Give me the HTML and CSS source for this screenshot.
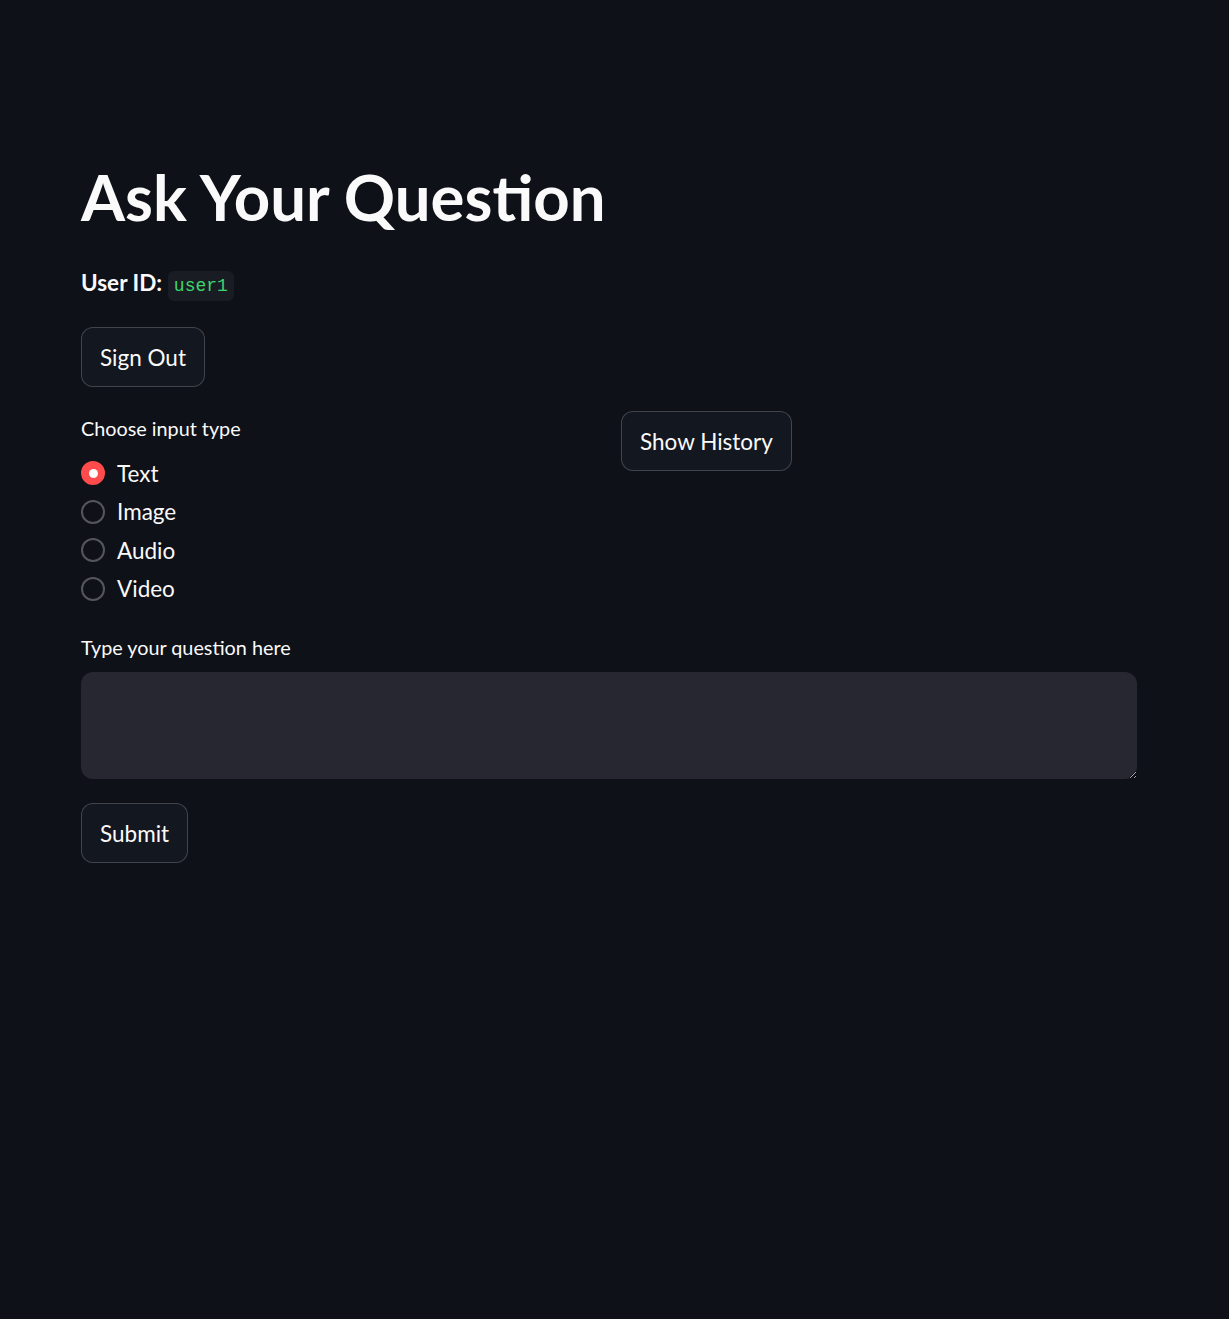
FILE: index.html
```html
<!DOCTYPE html>
<html lang="en">
<head>
<meta charset="utf-8">
<title>Ask Your Question</title>
<link rel="stylesheet" href="styles.css">
</head>
<body>
<main class="container">
  <h1 class="title">Ask Your Question</h1>
  <p class="user-line"><strong>User ID:</strong> <code class="code">user1</code></p>
  <div class="btn-row"><button class="btn">Sign Out</button></div>
  <div class="columns">
    <div class="col">
      <div class="label">Choose input type</div>
      <div class="radios">
        <label class="radio checked"><span class="dot"></span><span>Text</span></label>
        <label class="radio"><span class="dot"></span><span>Image</span></label>
        <label class="radio"><span class="dot"></span><span>Audio</span></label>
        <label class="radio"><span class="dot"></span><span>Video</span></label>
      </div>
    </div>
    <div class="col col-right">
      <button class="btn">Show History</button>
    </div>
  </div>
  <div class="label label-q">Type your question here</div>
  <textarea class="textarea"></textarea>
  <div class="btn-row submit-row"><button class="btn">Submit</button></div>
</main>
</body>
</html>
```

FILE: styles.css
```css
html, body {
  margin: 0;
  padding: 0;
  background: #0e1117;
  color: #fafafa;
  font-family: "Lato", "Liberation Sans", sans-serif;
}
.container {
  width: 1056px;
  margin-left: 81px;
  padding-top: 157px;
  display: flex;
  flex-direction: column;
}
.title {
  margin: 0;
  font-size: 63.5px;
  line-height: 79px;
  font-weight: 700;
}
.user-line {
  margin: 29px 0 0;
  font-size: 22.5px;
  line-height: 36px;
}
.user-line strong { font-weight: 700; }
.code {
  font-family: "Liberation Mono", monospace;
  font-size: 18px;
  color: #3dd56d;
  background: #1a1c23;
  border-radius: 6px;
  padding: 5px 6px;
}
.btn-row { margin-top: 23px; display: flex; }
.btn {
  font-family: inherit;
  font-size: 22.5px;
  color: #fafafa;
  background: #13171f;
  border: 1px solid rgba(250,250,250,0.2);
  border-radius: 12px;
  height: 60px;
  padding: 0 18px;
  cursor: pointer;
}
.columns {
  margin-top: 24px;
  display: grid;
  grid-template-columns: 516px 516px;
  column-gap: 24px;
}
.label {
  font-size: 19.8px;
  line-height: 34px;
}
.radios {
  margin-top: 9px;
  display: flex;
  flex-direction: column;
}
.radio {
  display: flex;
  align-items: center;
  gap: 12px;
  height: 38.5px;
  font-size: 22.5px;
}
.dot {
  box-sizing: border-box;
  width: 24px;
  height: 24px;
  border-radius: 50%;
  border: 2px solid rgba(250,250,250,0.3);
  background: #0e1117;
  display: flex;
  align-items: center;
  justify-content: center;
}
.checked .dot {
  background: #ff4b4b;
  border-color: #ff4b4b;
}
.checked .dot::after {
  content: "";
  width: 9px;
  height: 9px;
  border-radius: 50%;
  background: #fafafa;
}
.label-q { margin-top: 22px; }
.textarea {
  margin-top: 8px;
  box-sizing: border-box;
  width: 1056px;
  height: 107px;
  background: #262730;
  border: none;
  border-radius: 12px;
  color: #fafafa;
  font-family: inherit;
  font-size: 22.5px;
  padding: 12px 18px;
  outline: none;
}
.submit-row { margin-top: 24px; }
```
